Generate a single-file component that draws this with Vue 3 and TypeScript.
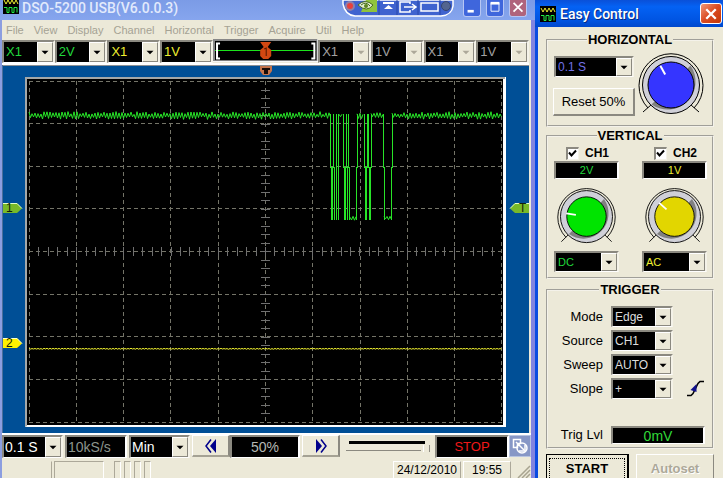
<script setup lang="ts">
import { ref } from 'vue'

interface Combo { label: string; value: string; tone: string; off?: boolean }

const menu: string[] = ['File', 'View', 'Display', 'Channel', 'Horizontal', 'Trigger', 'Acquire', 'Util', 'Help']

const leftCombos: Combo[] = [
  { label: 'CH1 probe', value: 'X1', tone: 'green' },
  { label: 'CH1 volts', value: '2V', tone: 'green' },
  { label: 'CH2 probe', value: 'X1', tone: 'yellow' },
  { label: 'CH2 volts', value: '1V', tone: 'yellow' },
]
const rightCombos: Combo[] = [
  { label: 'CH3 probe', value: 'X1', tone: 'gray', off: true },
  { label: 'CH3 volts', value: '1V', tone: 'gray', off: true },
  { label: 'CH4 probe', value: 'X1', tone: 'gray', off: true },
  { label: 'CH4 volts', value: '1V', tone: 'gray', off: true },
]
const channels = [
  { name: 'CH1', volts: '2V', coupling: 'DC', tone: 'green', fill: '#00e400', angle: -81 },
  { name: 'CH2', volts: '1V', coupling: 'AC', tone: 'yellow', fill: '#e2d600', angle: -48 },
]
const triggerRows = [
  { label: 'Mode', value: 'Edge' },
  { label: 'Source', value: 'CH1' },
  { label: 'Sweep', value: 'AUTO' },
  { label: 'Slope', value: '+' },
]
const enabled = ref<boolean[]>([true, true])
const zoomLevel = ref(100)

// Graticule: ten by eight divisions
const gridX = [29, 76, 123, 170, 218, 265, 312, 360, 407, 454, 501]
const gridY = [81, 123, 166, 208, 251, 294, 336, 379, 422]
const ticksX = Array.from({ length: 49 }, (_, i) => Math.round(29 + (i + 1) * 9.44))
const ticksY = Array.from({ length: 39 }, (_, i) => Math.round(81 + (i + 1) * 8.52))

function ripple(from: number, to: number, mid: number, amp: number): string {
  const pts: string[] = []
  let up = true
  for (let x = from; x <= to; x += 1.5) {
    const wobble = Math.abs(Math.sin(x * 12.9898) * 437.58) % 1
    const y = mid + (up ? -1 : 1) * amp * (0.4 + wobble * 0.9)
    pts.push(`${x.toFixed(1)},${y.toFixed(1)}`)
    up = !up
  }
  return pts.join(' ')
}
const ripples = [
  ripple(29, 331, 115.5, 3),
  ripple(339, 343, 115.5, 2.4),
  ripple(357, 364, 115.5, 2.4),
  ripple(371, 383, 115.5, 2.4),
  ripple(392, 502, 115.5, 3),
  ripple(350, 357, 218, 2),
  ripple(384, 392, 218, 2),
]
const upperEdges = [330.5, 333.5, 336.5, 338.5, 343.5, 346.5, 348.5, 357.5, 364.5, 367.5, 368.5, 371.5, 383.5, 392.5]
const lowerEdges = [331.5, 332.5, 334.5, 336.5, 338.5, 344.5, 345.5, 347.5, 349.5, 356.5, 365.5, 366.5, 369.5, 370.5, 384.5, 391.5]
const baseline = ripple(29, 502, 348.8, 0.4)
</script>

<template>
  <div class="desktop">
    <main class="window">
      <header class="titlebar">
        <svg class="app-icon" viewBox="0 0 16 16" aria-hidden="true">
          <rect width="16" height="16" fill="#000" />
          <path d="M1 2l2 4 2-4 2 4 2-4 2 4 2-4 2 4" fill="none" stroke="#ee3" />
          <path d="M1 9.500h3v5h2v-5h3v5h2v-5h3v5" fill="none" stroke="#2e4" />
        </svg>
        <h1>DSO-5200 USB(V6.0.0.3)</h1>
        <svg class="pill" viewBox="0 0 112 17" aria-hidden="true">
          <path d="M1 0v4q2 11 12 12h86q11-1 12-10V0z" fill="#3f63cf" stroke="#fff" stroke-width="1.500" />
          <circle cx="8" cy="6" r="5" fill="#8f7fa8" /><circle cx="8" cy="6" r="3" fill="#e8403c" />
          <path d="M24 0h11v12H19z" fill="#8fc33c" />
          <path d="M16 5q7-7 15 0q-6 8-15 0zM19 5q5-4 9 1" fill="#dfeccf" stroke="#486b20" />
          <circle cx="24" cy="6" r="2" fill="#5b8420" />
          <path d="M37 0v15M55 0v15M76 0v15M98 0v15" stroke="#2a48a8" />
          <path d="M41 3h11" stroke="#fff" stroke-width="2" /><path d="M42 9l4.500-4 4.500 4z" fill="#fff" />
          <path d="M68 4V2H58v10h10v-2M62 7h11M70 4l4 3-4 3" fill="none" stroke="#fff" stroke-width="1.500" />
          <path d="M79 3h17v8H79z" fill="none" stroke="#fff" stroke-width="1.500" />
          <circle cx="104" cy="6" r="4.500" fill="#53658f" stroke="#35456f" />
        </svg>
        <div class="win-buttons">
          <button type="button" aria-label="Minimize"><svg viewBox="0 0 18 16"><path d="M4 11.500h7" stroke="#fff" stroke-width="3" /></svg></button>
          <button type="button" aria-label="Maximize"><svg viewBox="0 0 18 16"><path d="M4.500 2.500h9v9h-9z" fill="none" stroke="#fff" /><path d="M4 2.500h10" stroke="#fff" stroke-width="3" /></svg></button>
          <button type="button" class="close-dim" aria-label="Close"><svg viewBox="0 0 18 16"><path d="M4 2l10 10M14 2L4 12" stroke="#fff" stroke-width="2" /></svg></button>
        </div>
      </header>

      <nav class="menu"><a v-for="m in menu" :key="m" href="#">{{ m }}</a></nav>

      <div class="toolbar">
        <span v-for="c in leftCombos" :key="c.label" class="combo tall" :class="c.tone">
          <select :aria-label="c.label"><option>{{ c.value }}</option></select>
          <svg viewBox="0 0 16 17" aria-hidden="true"><path d="M4 7h8l-4 4z" /></svg>
        </span>
        <svg class="track" viewBox="0 0 105 23" aria-hidden="true">
          <rect width="105" height="23" fill="#fff" /><rect width="104" height="22" fill="#888" />
          <rect x="2" y="2" width="101" height="19" fill="#000" />
          <path d="M2 11.500h100" stroke="#1ce41c" />
          <path d="M7 4.500H4v15h3M98 4.500h3v15h-3" fill="none" stroke="#fff" stroke-width="2" />
          <path d="M47 3h11l-3.500 5 3.500 3v6l-3 3h-5l-3-3v-6l3.500-3z" fill="#d24812" />
          <path d="M51 10l2-1v8" fill="none" stroke="#521800" />
        </svg>
        <span v-for="c in rightCombos" :key="c.label" class="combo tall off" :class="c.tone">
          <select :aria-label="c.label" :disabled="c.off"><option>{{ c.value }}</option></select>
          <svg viewBox="0 0 16 17" aria-hidden="true"><path d="M4 7h8l-4 4z" /></svg>
        </span>
      </div>

      <svg class="scope" viewBox="2 65 527 368" role="img" aria-label="Oscilloscope display">
        <rect x="2" y="65" width="527" height="368" fill="#004f96" />
        <rect x="2" y="65" width="527" height="1" fill="#8a8f94" />
        <rect x="2" y="65" width="1" height="368" fill="#4a6f9c" />
        <rect x="25" y="77" width="481" height="350" fill="#fff" />
        <path d="M25 427V77h480v2H27v347z" fill="#a4a8a8" />
        <rect x="27" y="79" width="476" height="346" fill="#000" />
        <g class="grid">
          <path v-for="x in gridX" :key="'x' + x" :d="`M${x + 0.5} 81V422`" />
          <path v-for="y in gridY" :key="'y' + y" :d="`M29 ${y + 0.5}H502`" />
        </g>
        <g class="ticks">
          <path v-for="x in ticksX" :key="'tx' + x" :d="`M${x + 0.5} 247v9`" />
          <path v-for="y in ticksY" :key="'ty' + y" :d="`M261 ${y + 0.5}h9`" />
        </g>
        <g class="trace-one">
          <polyline v-for="(r, i) in ripples" :key="i" :points="r" />
          <path v-for="x in upperEdges" :key="'u' + x" :d="`M${x} 114V168`" />
          <path v-for="x in lowerEdges" :key="'l' + x" :d="`M${x} 167V220`" />
        </g>
        <polyline class="trace-two" :points="baseline" />
        <path d="M3 203h14l5 5.500-5 4.500H3z" fill="#78b928" /><path d="M3 203.500h14l5 5" fill="none" stroke="#e4ffc8" />
        <path d="M3 338h14l5 5.500-5 4.500H3z" fill="#fff200" /><path d="M3 338.500h14l5 5" fill="none" stroke="#ffffd0" />
        <path d="M529 203h-14l-5 5.500 5 4.500h14z" fill="#78b928" /><path d="M529 203.500h-14l-5 5" fill="none" stroke="#e4ffc8" />
        <path d="M260 66h12v5l-3 4h-6l-3-4z" fill="#c4744c" />
        <path d="M262 68h8v2h-2v4h-4v-4h-2z" fill="#180c08" />
        <g class="marks">
          <text x="6" y="212">1</text><text x="6" y="347">2</text><text x="519" y="212">T</text>
        </g>
      </svg>

      <div class="controls">
        <span class="combo tall white base">
          <select aria-label="Time base"><option>0.1 S</option></select>
          <svg viewBox="0 0 16 17" aria-hidden="true"><path d="M4 7h8l-4 4z" /></svg>
        </span>
        <output class="readout rate">10kS/s</output>
        <span class="combo tall white base">
          <select aria-label="Memory depth"><option>Min</option></select>
          <svg viewBox="0 0 16 17" aria-hidden="true"><path d="M4 7h8l-4 4z" /></svg>
        </span>
        <button type="button" class="step" aria-label="Back">
          <svg viewBox="0 0 12 14"><path d="M6 .5L1 7l5 6.500" fill="none" stroke="#00008c" stroke-width="1.500" /><path d="M11 0v14L5 7z" fill="#00008c" /></svg>
        </button>
        <output class="readout pos">50%</output>
        <button type="button" class="step" aria-label="Forward">
          <svg viewBox="0 0 12 14"><path d="M6 .5L11 7l-5 6.500" fill="none" stroke="#00008c" stroke-width="1.500" /><path d="M1 0v14l6-7z" fill="#00008c" /></svg>
        </button>
        <input v-model="zoomLevel" class="slider" type="range" min="0" max="100" aria-label="Zoom">
        <output class="readout stop">STOP</output>
        <button type="button" class="swap" aria-label="Resize view">
          <svg viewBox="0 0 20 20"><path d="M3.500 3.500h7v4h-3v4h-4zM6 6l8 8" fill="none" stroke="#fff" stroke-width="1.500" /><circle cx="12" cy="12" r="5" fill="none" stroke="#fff" stroke-width="1.500" /><path d="M9 15h6V9" fill="none" stroke="#fff" stroke-width="1.500" /></svg>
        </button>
      </div>

      <footer class="status">
        <i class="cell wide" /><i class="cell wide" />
        <span class="minis"><i v-for="n in 4" :key="n" class="cell mini" /></span>
        <span class="cell date">24/12/2010</span>
        <span class="cell time">19:55</span>
        <svg class="grip" viewBox="0 0 16 18" aria-hidden="true"><path d="M3 18L15 6M7 18l8-8M11 18l4-4" stroke="#a8a490" stroke-width="1.500" /></svg>
      </footer>
    </main>

    <aside class="panel">
      <header class="panel-title">
        <svg class="app-icon" viewBox="0 0 16 16" aria-hidden="true">
          <rect width="16" height="16" fill="#000" />
          <path d="M1 2l2 4 2-4 2 4 2-4 2 4 2-4 2 4" fill="none" stroke="#ee3" />
          <path d="M1 9.500h3v5h2v-5h3v5h2v-5h3v5" fill="none" stroke="#2e4" />
        </svg>
        <h2>Easy Control</h2>
        <button type="button" class="close" aria-label="Close"><svg viewBox="0 0 19 19"><path d="M5 5l9 9M14 5l-9 9" stroke="#fff" stroke-width="2.200" /></svg></button>
      </header>

      <div class="panel-body">
        <fieldset>
          <legend>HORIZONTAL</legend>
          <div class="horizontal">
            <div class="stack">
              <span class="combo blue">
                <select aria-label="Horizontal time base"><option>0.1 S</option></select>
                <svg viewBox="0 0 16 17" aria-hidden="true"><path d="M4 7h8l-4 4z" /></svg>
              </span>
              <button type="button" class="raised">Reset 50%</button>
            </div>
            <svg class="knob big" viewBox="-34 -33 68 62" aria-hidden="true">
              <path class="line" d="M-23 23A32 32 0 1 1 23 23M-20 20l-8 7M20 20l8 7" />
              <circle class="line" r="28.500" fill="#d0d0d8" />
              <path d="M19.500 -19.500A28 28 0 0 1 -19.500 19.500L-16 16L16 -16z" fill="#808080" />
              <circle class="line" r="23" style="fill: #3535ff" />
              <path class="pointer" d="M0 -22V-12" transform="rotate(-29)" />
            </svg>
          </div>
        </fieldset>

        <fieldset>
          <legend>VERTICAL</legend>
          <div class="vertical">
            <div v-for="(ch, i) in channels" :key="ch.name" class="channel">
              <label class="check">
                <span class="tick">
                  <input v-model="enabled[i]" type="checkbox">
                  <svg v-if="enabled[i]" viewBox="0 0 13 13" aria-hidden="true"><path d="M3 5.500l2.500 3L10 3.500" fill="none" stroke="#000" stroke-width="2" /></svg>
                </span>
                {{ ch.name }}
              </label>
              <output class="readout volts" :class="ch.tone">{{ ch.volts }}</output>
              <svg class="knob" viewBox="-34 -33 68 62" aria-hidden="true">
                <path class="line" d="M-23 23A32 32 0 1 1 23 23M-20 20l-8 8M20 20l8 8" />
                <circle class="line" r="29" fill="#d0d0d8" />
                <path d="M19.500 -19.500A28 28 0 0 1 -19.500 19.500L-15 15L15 -15z" fill="#808080" />
                <circle class="line" r="22" :style="{ fill: ch.fill }" />
                <path class="pointer" d="M0 -23V-12" :transform="`rotate(${ch.angle})`" />
              </svg>
              <span class="combo small" :class="ch.tone">
                <select :aria-label="ch.name + ' coupling'"><option>{{ ch.coupling }}</option></select>
                <svg viewBox="0 0 16 17" aria-hidden="true"><path d="M4 7h8l-4 4z" /></svg>
              </span>
            </div>
          </div>
        </fieldset>

        <fieldset>
          <legend>TRIGGER</legend>
          <div class="trigger">
            <div v-for="t in triggerRows" :key="t.label" class="row">
              <label :for="'trigger-' + t.label">{{ t.label }}</label>
              <span class="combo silver">
                <select :id="'trigger-' + t.label"><option>{{ t.value }}</option></select>
                <svg viewBox="0 0 16 17" aria-hidden="true"><path d="M4 7h8l-4 4z" /></svg>
              </span>
              <svg v-if="t.label === 'Slope'" class="slope" viewBox="0 0 17 17" aria-hidden="true">
                <path d="M0 15.500h4l2-2 5-10 2-2h4" fill="none" stroke="#000" stroke-width="1.500" />
                <path d="M9.500 4v8l-6-2z" fill="#10108c" />
              </svg>
            </div>
            <div class="row level">
              <label for="trigger-level">Trig Lvl</label>
              <output id="trigger-level" class="readout lvl">0mV</output>
            </div>
          </div>
        </fieldset>

        <div class="actions">
          <button type="button" class="start"><span>START</span></button>
          <button type="button" class="auto" disabled>Autoset</button>
        </div>
      </div>
    </aside>
  </div>
</template>

<style>
body { background: #fff; }
</style>

<style scoped>
* { box-sizing: border-box; }
.desktop {
  display: flex;
  align-items: stretch;
  font-family: "Liberation Sans", Arial, sans-serif;
  font-size: 13px;
  color: #000;
}
svg { display: block; }
button { font: inherit; padding: 0; margin: 0; }

.window {
  flex: 1;
  min-width: 0;
  display: flex;
  flex-direction: column;
  background: #ece9d8;
  border-left: 2px solid #8c9ee0;
  border-right: 4px solid #8184e0;
}
.titlebar {
  display: flex;
  height: 20px;
  margin: 0 -4px 0 -2px;
  padding: 0 8px 0 3px;
  background: linear-gradient(#7b9be6, #86a5ee);
}
.titlebar .app-icon { margin-top: -2px; }
.app-icon { width: 16px; height: 16px; flex: none; }
h1, h2 {
  margin: 0;
  font-family: Roboto, "Open Sans", sans-serif;
  font-size: 14px;
  font-weight: 500;
  white-space: nowrap;
}
h1 { flex: 1; padding-left: 3px; line-height: 17px; color: #e2eafc; }
.pill { width: 112px; height: 17px; margin-right: 9px; }
.win-buttons { display: flex; gap: 5px; }
.win-buttons button {
  width: 18px;
  height: 17px;
  border: 1px solid #b7c6f4;
  border-top: 0;
  border-radius: 0 0 3px 3px;
  background: #3f66dc;
}
.win-buttons .close-dim { background: #b0647c; }
.win-buttons svg { width: 100%; }

.menu { display: flex; gap: 10px; padding: 0 4px; height: 19px; align-items: center; font-size: 11px; }
.menu a { color: #a5a294; text-decoration: none; }

.toolbar {
  display: grid;
  grid-template-columns: repeat(4, 1fr) 2fr repeat(4, 1fr);
  align-items: center;
  height: 26px;
  margin-right: 2px;
  background: #ece9d8;
  border-bottom: 2px solid #fff;
}
.track { width: 100%; }

.combo {
  display: grid;
  grid-template-columns: minmax(0, 1fr) 16px;
  height: 21px;
  border: 2px solid #8b8980;
  border-right: 2px solid #f4f2e8;
  border-bottom: 1px solid #fff;
  background: #000;
}
.combo.tall { height: 23px; }
.combo select {
  grid-area: 1 / 1 / 2 / 3;
  appearance: none;
  width: 100%;
  margin: 0;
  padding: 0 18px 0 2px;
  border: 0;
  border-radius: 0;
  outline: 0;
  background: #000;
  color: inherit;
  font: inherit;
  font-size: 12px;
  opacity: 1;
}
.combo.tall select { font-size: 13px; }
.combo.white select { font-size: 14px; padding-left: 1px; }
.combo.small select { font-size: 11px; }
.combo svg {
  grid-area: 1 / 2;
  width: 16px;
  height: 100%;
  background: #ece9d8;
  border: 1px solid #fff;
  border-right-color: #8b8980;
  border-bottom-color: #8b8980;
  pointer-events: none;
}
.combo.off svg { fill: #aca899; }
.green { color: #20d83c; }
.yellow { color: #eeee30; }
.gray { color: #a0a0a0; }
.white { color: #fff; }
.blue { color: #7272e8; }
.silver { color: #dcdcdc; }

.scope { width: calc(100% - 2px); height: auto; }
.scope + * { border-top: 2px solid #fff; }
.grid path { stroke: #747468; stroke-dasharray: 4 3; fill: none; }
.ticks path { stroke: #707070; }
.trace-one { fill: none; stroke: #28e428; }
.trace-two { fill: none; stroke: #f4f430; stroke-width: 1; }
.marks { font-size: 12px; fill: #102008; }

.controls { display: flex; gap: 2px; height: 27px; padding-bottom: 2px; }
.base { width: 61px; }
.readout {
  display: block;
  height: 23px;
  line-height: 20px;
  background: #000;
  border: 2px solid #8b8980;
  border-right-color: #fff;
  border-bottom: 1px solid #fff;
  text-align: center;
}
.rate { width: 62px; font-size: 14px; color: #8c948c; text-align: left; padding-left: 1px; }
.pos { flex: 1; font-size: 14px; color: #b4b8b4; margin-left: -2px; }
.stop { width: 74px; color: #f01818; margin-right: -2px; }
.step {
  display: grid;
  place-items: center;
  width: 38px;
  height: 22px;
  background: #ece9d8;
  border: 1px solid #fff;
  border-right: 2px solid #8b8980;
  border-bottom: 2px solid #a5a294;
}
.step svg { width: 12px; height: 14px; }
.slider {
  appearance: none;
  width: 84px;
  height: 11px;
  margin: 6px 3px 0 4px;
  background:
    linear-gradient(#000, #000) 3px 0 / 76px 3px no-repeat,
    linear-gradient(#8b8980, #8b8980) 0 9px / 75px 1px no-repeat;
}
.slider::-webkit-slider-thumb {
  appearance: none;
  width: 7px;
  height: 7px;
  margin-top: 4px;
  border-right: 1px solid #8b8980;
  border-left: 1px solid #fff;
  background: #ece9d8;
}
.swap { width: 22px; height: 22px; border: 1px solid #b8c4e0; background: #8797c6; }

.status { display: flex; gap: 2px; height: 18px; border-top: 0; }
.cell {
  margin-top: 1px;
  border: 1px solid #aca899;
  border-right-color: #fff;
  border-bottom: 0;
}
.cell.wide { width: 50px; }
.cell.wide:first-child { border-color: #ece9d8 #aca899 #ece9d8 #ece9d8; }
.minis { display: flex; gap: 3px; flex: 1; padding-left: 8px; }
.mini { width: 7px; }
.date, .time { font-size: 12px; line-height: 16px; text-align: center; border-color: #fff #aca899 #fff #fff; }
.date { width: 68px; }
.time { width: 48px; }
.grip { width: 16px; height: 18px; margin-left: 2px; }

.panel {
  width: 188px;
  flex: none;
  border-left: 3px solid #0a4be0;
  background: #ece9d8;
}
.panel-title {
  display: flex;
  align-items: center;
  height: 27px;
  margin-left: -3px;
  padding: 0 1px 0 5px;
  background: linear-gradient(#0a50d8, #0462f4 25%, #0054e2 75%, #0048cc);
}
h2 { flex: 1; padding-left: 4px; color: #fff; text-shadow: 1px 1px #0a2a80; }
.close {
  width: 22px;
  height: 21px;
  border: 1px solid #fff;
  border-radius: 3px;
  background: linear-gradient(135deg, #f09878, #da4a20 50%, #c43808);
}
.panel-body { padding: 6px 9px 0 8px; }

fieldset { margin: 0 0 2px; padding: 0; min-width: 0; border: 2px groove #f4f2ea; }
fieldset + fieldset { margin-bottom: 4px; }
fieldset + fieldset + fieldset { margin-bottom: 5px; }
legend { margin: 0 auto; padding: 0 1px; font-size: 13px; font-weight: bold; line-height: 14px; }

.horizontal { display: flex; justify-content: space-between; padding: 3px 7px 9px 5px; }
.stack { display: flex; flex-direction: column; gap: 11px; width: 82px; padding-top: 6px; }
.stack .combo { margin: 0 1px; }
.raised {
  height: 28px;
  background: #ece9d8;
  border: 1px solid #fff;
  border-right: 2px solid #8b8980;
  border-bottom: 2px solid #8b8980;
}
.knob { width: 61px; height: auto; overflow: visible; }
.knob.big { width: 68px; }
.line { stroke: #000; stroke-width: 1; }
path.line { fill: none; }
.pointer { stroke: #fff; stroke-width: 2; }

.vertical { display: flex; justify-content: space-between; padding: 2px 5px 5px 6px; }
.channel { width: 65px; display: flex; flex-direction: column; }
.channel .knob { margin: 8px auto; }
.check { display: flex; gap: 6px; height: 16px; padding-left: 12px; align-items: center; font-size: 12px; font-weight: bold; line-height: 16px; }
.tick { display: grid; width: 13px; height: 13px; }
.tick input {
  grid-area: 1 / 1;
  appearance: none;
  margin: 0;
  width: 13px;
  height: 13px;
  background: #fff;
  border: 2px solid #8b8980;
  border-right: 1px solid #f4f2e8;
  border-bottom: 1px solid #f4f2e8;
}
.tick svg { grid-area: 1 / 1; pointer-events: none; }
.volts { height: 18px; line-height: 15px; font-size: 11px; }

.trigger { display: flex; flex-direction: column; gap: 3px; padding: 9px 7px 3px 0; }
.row { display: grid; grid-template-columns: 55px 62px 1fr; column-gap: 8px; height: 21px; align-items: center; }
.row label { text-align: right; }
.slope { width: 17px; height: 17px; margin-left: 6px; }
.level { grid-template-columns: 55px 1fr; height: 18px; margin-top: 24px; }
.lvl { height: 18px; line-height: 16px; font-size: 14px; color: #30d838; }

.actions { display: flex; gap: 7px; height: 24px; }
.actions button { flex: 1; font-weight: bold; background: #ece9d8; border-bottom: 0; }
.start { padding: 3px 2px 0; border: 1px solid #000; border-right-width: 2px; }
.start span { display: block; height: 20px; line-height: 20px; border: 1px dotted #000; border-bottom: 0; }
.auto { padding-top: 4px; border: 1px solid #fff; border-right-color: #8b8980; color: #aca899; text-shadow: 1px 1px #fff; }
</style>
